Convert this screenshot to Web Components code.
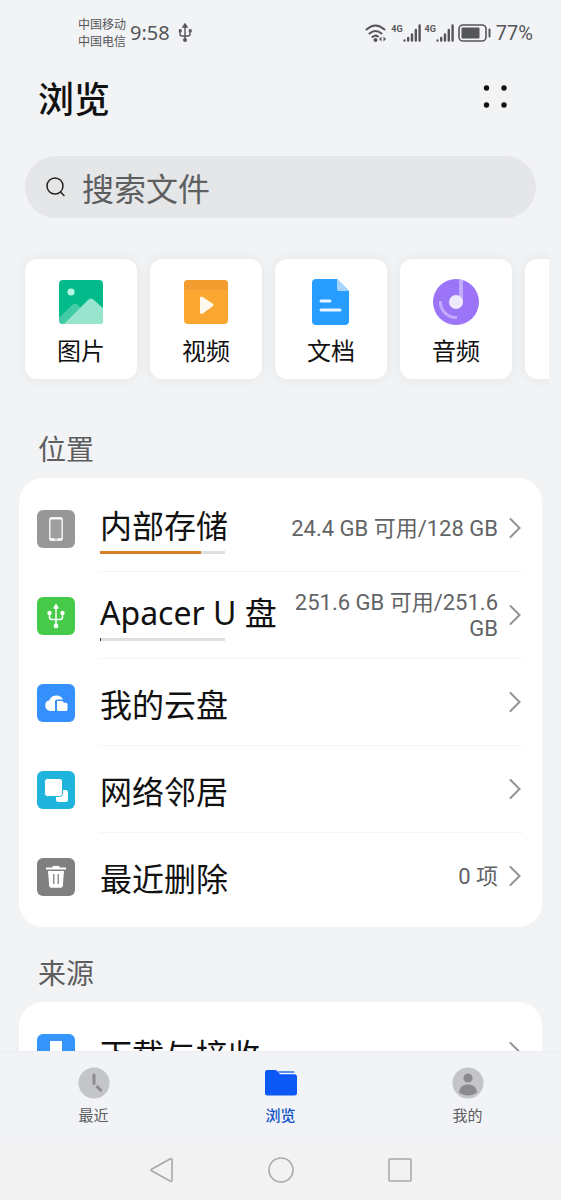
<!DOCTYPE html>
<html lang="zh-CN">
<head>
<meta charset="utf-8">
<meta name="viewport" content="width=device-width, initial-scale=1">
<title>浏览</title>
<style>
  html, body { margin: 0; height: 100%; }
  body {
    background: #f2f3f5;
    color: #111;
    font-family: "Noto Sans", "Noto Sans CJK SC", sans-serif;
  }
</style>
</head>
<body>
<file-browser>
  <status-bar slot="status"></status-bar>

  <page-header>浏览</page-header>
  <search-box></search-box>

  <category-strip>
    <category-card label="图片">
      <svg width="48" height="48" viewBox="0 0 48 48">
        <defs><clipPath id="pic"><rect x="2" y="2" width="44" height="44" rx="4"/></clipPath></defs>
        <g clip-path="url(#pic)">
          <rect width="48" height="48" fill="#03bb8a"/>
          <path d="M0 42 L15 27 Q18 24 21 27 L38 44 V48 H0Z" fill="#43cba6"/>
          <path d="M5 48 L31 22 Q34 19 37 22 L48 32 V48Z" fill="#98e4cd"/>
          <circle cx="14" cy="14" r="3.6" fill="#b8f5e4"/>
        </g>
      </svg>
    </category-card>
    <category-card label="视频">
      <svg width="48" height="48" viewBox="0 0 48 48">
        <rect x="2" y="2" width="44" height="44" rx="4" fill="#faa732"/>
        <path d="M2 12V6a4 4 0 0 1 4-4h36a4 4 0 0 1 4 4v6Z" fill="#f29d2f"/>
        <path d="M19.500 20 L30 27 L19.500 34.500Z" fill="#fff8ec" stroke="#fff8ec" stroke-width="3" stroke-linejoin="round"/>
      </svg>
    </category-card>
    <category-card label="文档">
      <svg width="48" height="48" viewBox="0 0 48 48">
        <path d="M9 1h21l12 12v30a4 4 0 0 1-4 4H9a4 4 0 0 1-4-4V5a4 4 0 0 1 4-4Z" fill="#279eff"/>
        <path d="M30 1l12 12H32a2 2 0 0 1-2-2Z" fill="#a5d5ff"/>
        <path d="M14 23h9M14 32h19" stroke="#e9f6ff" stroke-width="3" stroke-linecap="round"/>
      </svg>
    </category-card>
    <category-card label="音频">
      <svg width="48" height="48" viewBox="0 0 48 48">
        <circle cx="24" cy="24" r="23" fill="#9c74f8"/>
        <path d="M27 1.200Q29 1.400 31 2V24H27Z" fill="#c3acfb"/>
        <path d="M8.500 23A15.500 15.500 0 0 0 25 39.500" fill="none" stroke="#c3acfb" stroke-width="3"/>
        <circle cx="24" cy="24" r="7" fill="#efe9fe"/>
      </svg>
    </category-card>
    <category-card label=""></category-card>
  </category-strip>

  <section-title class="first">位置</section-title>
  <storage-list>
    <storage-row label="内部存储" detail="24.4 GB 可用/128 GB" used="81" tint="#d9802b">
      <svg width="38" height="38" viewBox="0 0 38 38">
        <rect width="38" height="38" rx="6" fill="#979797"/>
        <rect x="12.800" y="7.800" width="12.400" height="22.400" rx="2" fill="#9d9d9d" stroke="#fff" stroke-width="1.300"/>
        <path d="M13 8.400h12M13 29.200h12" stroke="#fff" stroke-width="2"/>
        <path d="M17.500 29h3" stroke="#888"/>
      </svg>
    </storage-row>
    <storage-row label="Apacer U 盘" detail="251.6 GB 可用/251.6 GB" used="1" tint="#1b4257">
      <svg width="38" height="38" viewBox="0 0 38 38">
        <rect width="38" height="38" rx="6" fill="#45cb49"/>
        <path d="M19 11V29M12.500 16V20a2.500 2.500 0 0 0 2.500 2.500H23a2.500 2.500 0 0 0 2.500-2.500V16" fill="none" stroke="#fff" stroke-width="1.500"/>
        <path d="M19 6.500l3 5h-6Z" fill="#fff"/>
        <circle cx="19" cy="10" r="2" fill="#fff"/><circle cx="12.500" cy="16" r="2.200" fill="#fff"/>
        <circle cx="25.500" cy="16" r="2.200" fill="#fff"/><circle cx="19" cy="29" r="2.400" fill="#fff"/>
      </svg>
    </storage-row>
    <storage-row label="我的云盘">
      <svg width="38" height="38" viewBox="0 0 38 38">
        <rect width="38" height="38" rx="6" fill="#3590fc"/>
        <path d="M18 27H13.500A5.500 5.500 0 0 1 12.300 16.200A7.500 7.500 0 0 1 26 15.500H20a2 2 0 0 0-2 2Z" fill="#fff"/>
        <path d="M20 17h5.500l1.500 1.800h2a1.500 1.500 0 0 1 1.500 1.500v5.200a1.500 1.500 0 0 1-1.500 1.500H21.500a1.500 1.500 0 0 1-1.500-1.500Z" fill="#fff"/>
      </svg>
    </storage-row>
    <storage-row label="网络邻居">
      <svg width="38" height="38" viewBox="0 0 38 38">
        <rect width="38" height="38" rx="6" fill="#1fb4dc"/>
        <rect x="19" y="19" width="12" height="12" rx="2.500" fill="#fff"/>
        <rect x="7.500" y="7.500" width="18" height="18" rx="3" fill="#fff" stroke="#1fb4dc"/>
      </svg>
    </storage-row>
    <storage-row label="最近删除" detail="0 项">
      <svg width="38" height="38" viewBox="0 0 38 38">
        <rect width="38" height="38" rx="6" fill="#808080"/>
        <path d="M9 10.500h20M15.500 9h7" stroke="#fff" stroke-width="2"/>
        <path d="M11 13h16l-1.200 15a2 2 0 0 1-2 1.700h-9.600a2 2 0 0 1-2-1.700Z" fill="#fff"/>
        <path d="M16.800 16v10M21.200 16v10" stroke="#808080" stroke-width="1.300"/>
      </svg>
    </storage-row>
  </storage-list>

  <section-title>来源</section-title>
  <storage-list>
    <storage-row label="下载与接收">
      <svg width="38" height="38" viewBox="0 0 38 38">
        <rect width="38" height="38" rx="6" fill="#3595fb"/>
        <path d="M13 7h12v11h5L19 29 8 18h5Z" fill="#fff"/>
      </svg>
    </storage-row>
  </storage-list>

  <tab-bar slot="tabs">
    <tab-item label="最近">
      <svg width="34" height="34" viewBox="0 0 34 34">
        <circle cx="17" cy="17" r="15.500" fill="#c4c5c7"/>
        <path d="M17 9v8.500" stroke="#8b8b8d" stroke-width="3" stroke-linecap="round"/>
        <path d="M19.500 20l5 5" stroke="#8b8b8d" stroke-width="3"/>
      </svg>
    </tab-item>
    <tab-item label="浏览" current>
      <svg width="34" height="34" viewBox="0 0 34 34">
        <path d="M15 6h14.500" stroke="#5c8fe8" stroke-width="2" stroke-linecap="round"/>
        <path d="M3.500 4H11a3 3 0 0 1 2.200 1L16 8.300H30.500a2.500 2.500 0 0 1 2.500 2.500V27a2.500 2.500 0 0 1-2.500 2.500H3.500A2.500 2.500 0 0 1 1 27V6.500A2.500 2.500 0 0 1 3.500 4Z" fill="#0a59f7"/>
      </svg>
    </tab-item>
    <tab-item label="我的">
      <svg width="34" height="34" viewBox="0 0 34 34">
        <circle cx="17" cy="17" r="15.500" fill="#c4c5c7"/>
        <circle cx="17" cy="12" r="4.600" fill="#8b8b8d"/>
        <path d="M8 26.500C9 20.500 12 18.500 17 18.500S25 20.500 26 26.500Q22 29.500 17 29.500T8 26.500Z" fill="#8b8b8d"/>
      </svg>
    </tab-item>
  </tab-bar>
  <system-nav slot="tabs"></system-nav>
</file-browser>

<script>
  const define = (name, html, setup) => customElements.define(name, class extends HTMLElement {
    constructor() {
      super();
      this.attachShadow({ mode: "open" }).innerHTML = html;
    }
    connectedCallback() {
      if (setup) setup(this, this.shadowRoot);
    }
  });

  define("file-browser", `
    <style>
      :host { display: flex; flex-direction: column; height: 100vh; }
      main { flex: 1; min-height: 0; overflow-y: auto; scrollbar-width: none; }
    </style>
    <slot name="status"></slot>
    <main><slot></slot></main>
    <slot name="tabs"></slot>`);

  define("status-bar", `
    <style>
      :host { display: flex; align-items: center; justify-content: space-between; height: 66px;
              padding: 0 28px 0 78px; color: #555659; flex: none; box-sizing: border-box; }
      .side { display: flex; align-items: center; gap: 4px; }
      .carriers { font-size: 12px; line-height: 17px; }
      .time, .charge { font-size: 20px; line-height: 24px; }
      .charge { font-family: Roboto, sans-serif; }
      .net { display: flex; align-items: flex-start; }
      .net span { font: 700 9px/10px Roboto, sans-serif; }
      svg { display: block; }
      .usb { margin-left: 4px; }
    </style>
    <div class="side">
      <div class="carriers"><div>中国移动</div><div>中国电信</div></div>
      <span class="time">9:58</span>
      <svg class="usb" width="14" height="20" viewBox="0 0 14 20" fill="none" stroke="#555659" stroke-width="1.400">
        <path d="M7 3v13M2 8v3q0 2 2 2h6q2 0 2-2V8"/>
        <path d="M7 1l2 3H5ZM1.500 7h1.500v1.500H1.500ZM11.500 7H13v1.500h-1.500Z" fill="#555659"/>
        <circle cx="7" cy="17" r="1.300" fill="#555659"/>
      </svg>
    </div>
    <div class="side">
      <svg width="22" height="20" viewBox="0 0 22 20" fill="none" stroke="#555659" stroke-width="2" stroke-linecap="round">
        <path d="M1.500 6.500Q10.500-1.500 19.500 6.500M4.500 10.500Q10.500 5.500 16.500 10.500M7.500 14Q10.500 11.500 13 13.500"/>
        <circle cx="10.500" cy="17" r="1" fill="#555659"/>
        <path d="M16.500 13.500l-2.500 2.500 2.500 2.500ZM18.500 13.500l2.500 2.500-2.500 2.500Z" fill="#555659" stroke="none"/>
      </svg>
      <div class="net"><span>4G</span><svg width="18" height="18" viewBox="0 0 18 18" stroke="#555659" stroke-width="2.400" stroke-linecap="round"><path d="M1.500 16.500v.1M5.200 14v2.500M9 10.500v6M12.800 6v10.500M16.600 1.500v15"/></svg></div>
      <div class="net"><span>4G</span><svg width="18" height="18" viewBox="0 0 18 18" stroke="#555659" stroke-width="2.400" stroke-linecap="round"><path d="M1.500 16.500v.1M5.200 14v2.500M9 10.500v6M12.800 6v10.500M16.600 1.500v15"/></svg></div>
      <svg width="34" height="18" viewBox="0 0 34 18">
        <rect x="1" y="1" width="27" height="16" rx="4" fill="none" stroke="#555659" stroke-width="1.600"/>
        <rect x="3.500" y="3.500" width="18" height="11" rx="1" fill="#555659"/>
        <path d="M31.500 5.500v7" stroke="#555659" stroke-width="2" stroke-linecap="round"/>
      </svg>
      <span class="charge">77%</span>
    </div>`);

  define("page-header", `
    <style>
      :host { display: flex; align-items: center; justify-content: space-between; height: 66px; padding: 0 44px 0 38px; }
      h1 { margin: 0; padding-top: 2px; font-size: 36px; line-height: 44px; font-weight: 500; }
      button { border: 0; padding: 0; background: none; display: block; }
      svg { display: block; }
    </style>
    <h1><slot></slot></h1>
    <button type="button" aria-label="更多">
      <svg width="42" height="42" viewBox="0 0 42 42" fill="#111">
        <circle cx="11.500" cy="10" r="2.700"/><circle cx="29" cy="10" r="2.700"/>
        <circle cx="11.500" cy="27" r="2.700"/><circle cx="29" cy="27" r="2.700"/>
      </svg>
    </button>`);

  define("search-box", `
    <style>
      :host { display: block; padding: 24px 25px 0; }
      label { display: flex; align-items: center; gap: 16px; height: 62px; padding: 0 20px; border-radius: 31px; background: #e5e6e8; }
      svg { flex: none; }
      input { flex: 1; min-width: 0; border: 0; padding: 2px 0 0; outline: 0; background: none;
              font: inherit; font-size: 32px; line-height: 44px; height: 48px; color: #111; }
      input::placeholder { color: #5d5e60; opacity: 1; }
    </style>
    <label>
      <svg width="21" height="22" viewBox="0 0 21 22" fill="none" stroke="#222" stroke-width="1.500" stroke-linecap="round">
        <circle cx="10" cy="10" r="8"/><path d="M16 16.500l3 3"/>
      </svg>
      <input type="text" placeholder="搜索文件" aria-label="搜索文件">
    </label>`);

  define("category-strip", `
    <style>
      :host { display: flex; gap: 13px; margin: 21px 12px 0 0; padding: 20px 0 20px 25px; overflow-x: auto; scrollbar-width: none; }
    </style>
    <slot></slot>`);

  define("category-card", `
    <style>
      :host { display: block; flex: 0 0 112px; }
      button { display: flex; flex-direction: column; align-items: center; width: 100%; height: 120px; padding: 19px 0 0;
               border: 0; border-radius: 12px; background: #fff; box-shadow: 0 0 14px rgba(0,0,0,.06); font: inherit; color: #111; }
      span { font-size: 24px; line-height: 32px; margin-top: 9px; }
      ::slotted(svg) { display: block; }
    </style>
    <button type="button"><slot></slot><span></span></button>`,
    (el, root) => { root.querySelector("span").textContent = el.getAttribute("label"); });

  define("section-title", `
    <style>
      :host { display: block; padding: 26px 38px 9px; }
      :host(.first) { padding-top: 30px; }
      h2 { margin: 0; font-size: 28px; line-height: 40px; font-weight: 400; color: #5d5e60; }
    </style>
    <h2><slot></slot></h2>`);

  define("storage-list", `
    <style>
      :host { display: block; margin: 0 19px; padding: 7px 0; border-radius: 24px; background: #fff; }
    </style>
    <slot></slot>`);

  define("storage-row", `
    <style>
      :host { display: block; }
      a { display: flex; gap: 25px; height: 87px; padding: 0 19px 0 18px; align-items: center; color: inherit; text-decoration: none; }
      .body { flex: 1; min-width: 0; height: 100%; box-sizing: border-box; display: flex; align-items: center; border-bottom: 1px solid #f5f5f6; }
      :host(:last-child) .body { border-color: transparent; }
      .name { flex: none; display: flex; flex-direction: column; padding-top: 5px; }
      :host([used]) .name { padding-top: 2px; }
      .label { font-size: 32px; line-height: 44px; white-space: nowrap; }
      progress { appearance: none; display: block; width: 125px; height: 3px; margin-top: 3px; border: 0; background: #dedfe0; }
      progress::-webkit-progress-bar { background: #dedfe0; }
      progress::-webkit-progress-value { background: var(--tint); }
      .detail { flex: 1; padding: 2px 10px 0 12px; text-align: right; font-family: Roboto, "Noto Sans CJK SC", sans-serif;
                font-size: 22px; line-height: 26px; word-break: keep-all; color: #626365; }
      .chevron { flex: none; margin-right: 1px; }
      ::slotted(svg) { flex: none; }
    </style>
    <a href="#">
      <slot></slot>
      <div class="body">
        <div class="name"><span class="label"></span></div>
        <span class="detail"></span>
        <svg class="chevron" width="14" height="22" viewBox="0 0 14 22" fill="none" stroke="#929395" stroke-width="2" stroke-linecap="round">
          <path d="M2.500 2l9 9-9 9"/>
        </svg>
      </div>
    </a>`,
    (el, root) => {
      root.querySelector(".label").textContent = el.getAttribute("label");
      root.querySelector(".detail").textContent = el.getAttribute("detail") || "";
      if (el.hasAttribute("used") && !root.querySelector("progress")) {
        const bar = document.createElement("progress");
        bar.max = 100;
        bar.value = Number(el.getAttribute("used"));
        bar.setAttribute("aria-label", "已用空间");
        bar.style.setProperty("--tint", el.getAttribute("tint"));
        root.querySelector(".name").append(bar);
      }
    });

  define("tab-bar", `
    <style>
      :host { display: block; flex: none; background: #f1f3f6; border-top: 1px solid #eceef0; }
      nav { display: grid; grid-template-columns: repeat(3, 1fr); }
    </style>
    <nav><slot></slot></nav>`);

  define("tab-item", `
    <style>
      :host { display: block; }
      button { display: flex; flex-direction: column; align-items: center; width: 100%; height: 88px; padding: 14px 0 0;
               border: 0; background: none; font: inherit; font-size: 15px; line-height: 20px; color: #5d5e60; }
      :host([current]) button { color: #0b50c8; font-weight: 500; }
      span { margin-top: 5px; }
      ::slotted(svg) { display: block; }
    </style>
    <button type="button"><slot></slot><span></span></button>`,
    (el, root) => { root.querySelector("span").textContent = el.getAttribute("label"); });

  define("system-nav", `
    <style>
      :host { display: flex; flex: none; justify-content: center; height: 60px; background: #f2f2f2; }
      button { width: 119px; border: 0; padding: 0; background: none; display: grid; place-items: center; }
      svg { fill: none; stroke: #a9a9a9; stroke-width: 1.600; stroke-linejoin: round; }
    </style>
    <button type="button" aria-label="返回"><svg width="26" height="26" viewBox="0 0 26 26"><path d="M23 2.500v21a1 1 0 0 1-1.500.800L3 14a1 1 0 0 1 0-2L21.500 1.700A1 1 0 0 1 23 2.500Z"/></svg></button>
    <button type="button" aria-label="主屏幕"><svg width="26" height="26" viewBox="0 0 26 26"><circle cx="13" cy="13" r="12"/></svg></button>
    <button type="button" aria-label="最近任务"><svg width="26" height="26" viewBox="0 0 26 26"><rect x="2" y="2" width="22" height="22" rx="1"/></svg></button>`);
</script>
</body>
</html>
